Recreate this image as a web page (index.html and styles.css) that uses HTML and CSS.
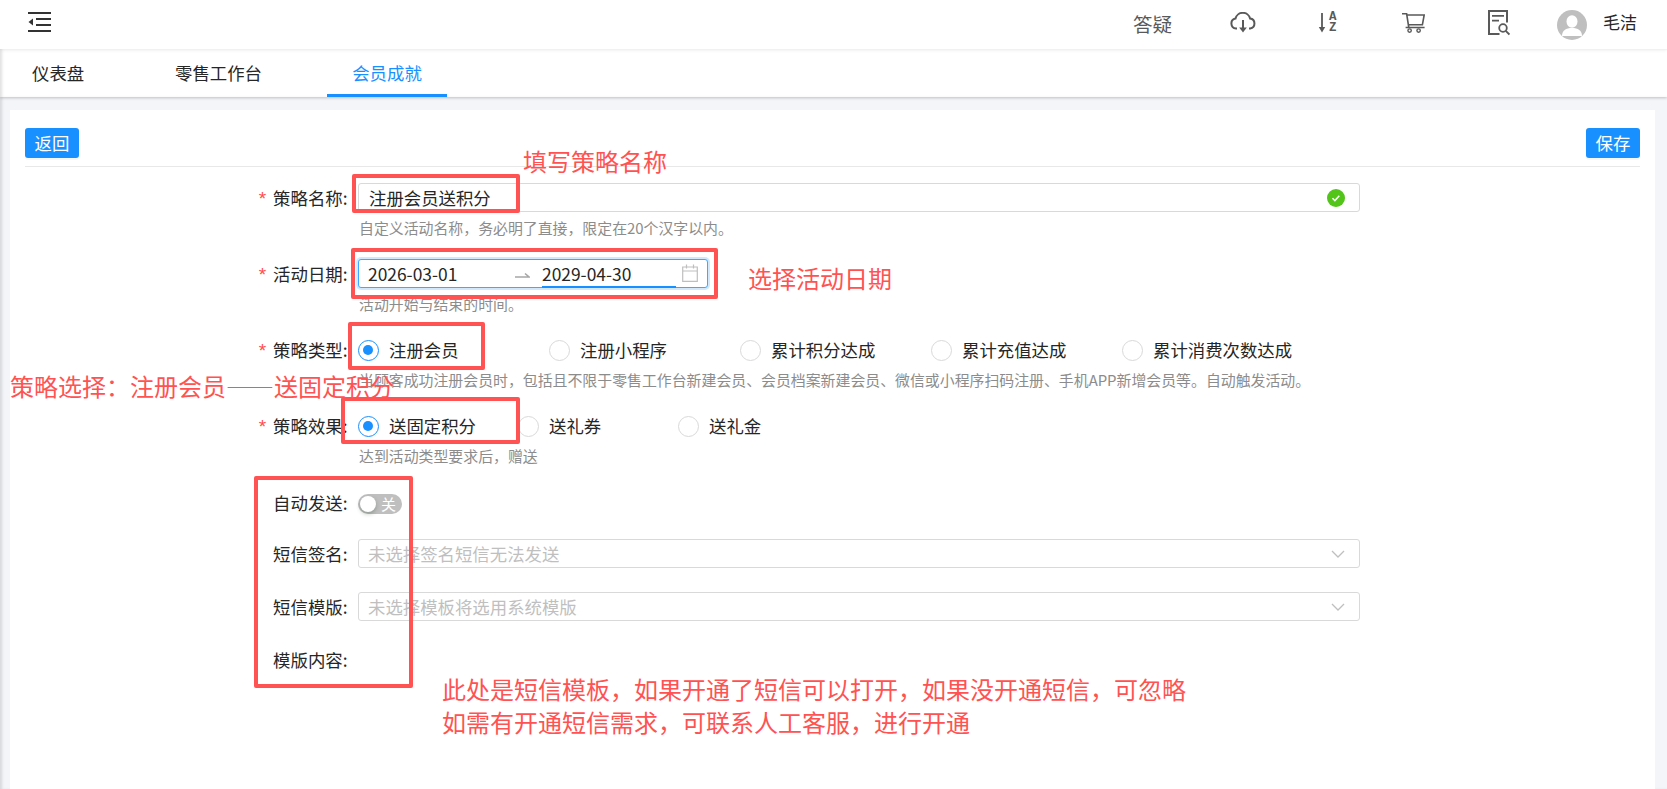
FILE: index.html
```html
<!DOCTYPE html>
<html lang="zh-CN">
<head>
<meta charset="utf-8">
<title>会员成就</title>
<link rel="stylesheet" href="styles.css">
</head>
<body>
<div class="page">
  <header class="topbar">
    <svg class="menu-icon" viewBox="0 0 23 20" width="23" height="20"><path d="M0 1h23M8 7h15M8 13h15M0 19h23" stroke="#333" stroke-width="1.8" fill="none"/><path d="M5 6.5v7L0.5 10z" fill="#333"/></svg>
    <div class="top-actions">
      <span class="qa">答疑</span>
      <svg class="ic ic-cloud" viewBox="0 0 26 22" width="26" height="22"><path d="M7 16.5H6a5 5 0 0 1-.5-9.9 7.5 7.5 0 0 1 14.6 0 5 5 0 0 1 .1 9.9H19" fill="none" stroke="#595959" stroke-width="2"/><path d="M13 8v11" stroke="#595959" stroke-width="2"/><path d="M9.2 15.5h7.6L13 20.5z" fill="#595959"/></svg>
      <span class="ic-sort">
        <svg viewBox="0 0 8 22" width="8" height="22"><path d="M4 1v17" stroke="#595959" stroke-width="1.8"/><path d="M.8 15h6.4L4 20.5z" fill="#595959"/></svg>
        <span class="az"><span>A</span><span>Z</span></span>
      </span>
      <svg class="ic ic-cart" viewBox="0 0 23 20" width="23" height="20"><path d="M0 .6h4.6L6.8 14.5M4.8 2h17.4l-1.8 9.7H6.4M3.6 14.5h19" fill="none" stroke="#595959" stroke-width="1.6"/><circle cx="7.6" cy="17.6" r="1.7" fill="none" stroke="#595959" stroke-width="1.4"/><circle cx="16.6" cy="17.6" r="1.7" fill="none" stroke="#595959" stroke-width="1.4"/></svg>
      <svg class="ic ic-report" viewBox="0 0 22 26" width="22" height="26"><path d="M11.5 24H1V1h18v11.5" fill="none" stroke="#595959" stroke-width="2"/><path d="M4 5.8h12M4 10.7h7" stroke="#595959" stroke-width="1.8"/><circle cx="15" cy="18" r="3.8" fill="none" stroke="#595959" stroke-width="1.8"/><path d="M17.8 20.8l3.6 3.7" stroke="#595959" stroke-width="1.8"/></svg>
      <svg class="avatar" viewBox="0 0 30 30" width="30" height="30"><clipPath id="av"><circle cx="15" cy="15" r="15"/></clipPath><g clip-path="url(#av)"><rect width="30" height="30" fill="#bfbfbf"/><ellipse cx="15" cy="11.5" rx="5.5" ry="6.2" fill="#fff"/><path d="M5 26c0-5.5 4-8 10-8s10 2.5 10 8z" fill="#fff"/></g></svg>
      <span class="user">毛洁</span>
    </div>
  </header>

  <nav class="tabs">
    <a class="tab tab-a">仪表盘</a>
    <a class="tab tab-b">零售工作台</a>
    <a class="tab tab-c active">会员成就</a>
  </nav>

  <main class="content">
    <section class="card">
      <div class="toolbar">
        <button class="btn">返回</button>
        <button class="btn">保存</button>
      </div>

      <form class="form">
        <div class="row">
          <label class="label req">策略名称:</label>
          <div class="field">
            <div class="input">注册会员送积分
              <svg class="ok" viewBox="0 0 18 18" width="18" height="18"><circle cx="9" cy="9" r="9" fill="#52c41a"/><path d="M5.5 9.2l2.4 2.4 4.4-4.8" fill="none" stroke="#fff" stroke-width="1.5"/></svg>
            </div>
            <p class="desc">自定义活动名称，务必明了直接，限定在20个汉字以内。</p>
          </div>
        </div>

        <div class="row">
          <label class="label req">活动日期:</label>
          <div class="field">
            <div class="range">
              <span class="date date-from">2026-03-01</span>
              <svg class="arrow" viewBox="0 0 16 8" width="16" height="8"><path d="M1 6h14L11 2.5" fill="none" stroke="#a6a6a6" stroke-width="1.6"/></svg>
              <span class="date date-to">2029-04-30</span>
              <svg class="cal" viewBox="0 0 16 18" width="16" height="18"><path d="M.7 3h14.6v14.3H.7zM.7 7h14.6M4.5 .5v4M11.5 .5v4" fill="none" stroke="#bfbfbf" stroke-width="1.2"/></svg>
            </div>
            <p class="desc">活动开始与结束的时间。</p>
          </div>
        </div>

        <div class="row">
          <label class="label req">策略类型:</label>
          <div class="field">
            <div class="radios radios-wide">
              <span class="radio on">注册会员</span>
              <span class="radio">注册小程序</span>
              <span class="radio">累计积分达成</span>
              <span class="radio">累计充值达成</span>
              <span class="radio">累计消费次数达成</span>
            </div>
            <p class="desc">当顾客成功注册会员时，包括且不限于零售工作台新建会员、会员档案新建会员、微信或小程序扫码注册、手机APP新增会员等。自动触发活动。</p>
          </div>
        </div>

        <div class="row">
          <label class="label req">策略效果:</label>
          <div class="field">
            <div class="radios radios-narrow">
              <span class="radio on">送固定积分</span>
              <span class="radio">送礼券</span>
              <span class="radio">送礼金</span>
            </div>
            <p class="desc">达到活动类型要求后，赠送</p>
          </div>
        </div>

        <div class="plain">
          <div class="row row-switch">
            <label class="label">自动发送:</label>
            <div class="field"><span class="switch"><i class="knob"></i>关</span></div>
          </div>
          <div class="row">
            <label class="label">短信签名:</label>
            <div class="field"><div class="select">未选择签名短信无法发送<svg class="chev" viewBox="0 0 14 8" width="14" height="8"><path d="M1 1l6 6 6-6" fill="none" stroke="#bfbfbf" stroke-width="1.3"/></svg></div></div>
          </div>
          <div class="row">
            <label class="label">短信模版:</label>
            <div class="field"><div class="select">未选择模板将选用系统模版<svg class="chev" viewBox="0 0 14 8" width="14" height="8"><path d="M1 1l6 6 6-6" fill="none" stroke="#bfbfbf" stroke-width="1.3"/></svg></div></div>
          </div>
          <div class="row">
            <label class="label">模版内容:</label>
            <div class="field"></div>
          </div>
        </div>
      </form>
    </section>
  </main>

  <div class="mark mark-name"></div>
  <div class="mark mark-date"></div>
  <div class="mark mark-type"></div>
  <div class="mark mark-effect"></div>
  <div class="mark mark-sms"></div>
  <div class="note note-name">填写策略名称</div>
  <div class="note note-date">选择活动日期</div>
  <div class="note note-type">策略选择：注册会员——送固定积分</div>
  <div class="note note-sms">此处是短信模板，如果开通了短信可以打开，如果没开通短信，可忽略<br>如需有开通短信需求，可联系人工客服，进行开通</div>
</div>
</body>
</html>
```

FILE: styles.css
```css
* { box-sizing: border-box; }
html, body { margin: 0; height: 100%; }
body {
  font-family: "Noto Sans CJK SC", "Noto Sans", sans-serif;
  font-size: 17.4px;
  color: #262626;
  background: #f3f5f9;
  overflow: hidden;
}
.page { position: relative; width: 1667px; height: 789px; display: flex; flex-direction: column; }

.topbar {
  height: 49px;
  background: #fff;
  display: flex;
  align-items: center;
  padding-left: 28px;
  box-shadow: 0 1px 4px rgba(0, 21, 41, .08);
  position: relative;
  z-index: 2;
}
.menu-icon { margin-top: -5px; }
.top-actions { margin-left: auto; display: flex; align-items: center; height: 49px; }
.qa { font-size: 19.6px; color: #595959; width: 40px; margin-right: 57px; white-space: nowrap; line-height: 47px; height: 49px; }
.ic { flex: none; }
.ic-cloud { margin-right: 62px; margin-top: -3px; }
.ic-sort { display: flex; align-items: center; width: 20px; margin-right: 64px; margin-top: -3px; }
.az { display: flex; flex-direction: column; margin-left: 3px; font-family: "Liberation Mono", monospace; font-size: 12.5px; font-weight: 700; line-height: 11px; color: #595959; }
.ic-cart { margin-right: 63px; margin-top: -3px; }
.ic-report { margin-right: 47px; margin-top: -4px; }
.avatar { margin-top: 1px; }
.user { margin-left: 16px; width: 64px; font-size: 17px; color: #262626; margin-top: -6px; }

.tabs {
  height: 48px;
  background: #fff;
  display: flex;
  box-shadow: 0 1px 3px rgba(0, 0, 0, .2), inset 3px 0 3px -1px rgba(0, 0, 0, .12);
  position: relative;
  z-index: 1;
}
.tab { display: block; height: 48px; line-height: 48px; color: #262626; }
.tab-a { width: 175px; padding-left: 32px; }
.tab-b { width: 152px; }
.tab-c { width: 120px; color: #1890ff; border-bottom: 3px solid #1890ff; text-align: center; }

.content { flex: 1; padding: 13px 12px 0 10px; min-height: 0; box-shadow: inset 3px 0 3px -1px rgba(0, 0, 0, .12); }
.card { height: 100%; background: #fff; padding: 18px 15px 0; }

.toolbar { display: flex; justify-content: space-between; align-items: flex-start; height: 39px; border-bottom: 1px solid #e8e8e8; }
.btn {
  width: 54px; height: 30px; padding: 0; border: 0; border-radius: 3px;
  background: #1890ff; color: #fff; font: inherit; line-height: 30px;
  box-shadow: 0 2px 0 rgba(0, 0, 0, .03);
}

.form { padding-top: 16px; display: flex; flex-direction: column; gap: 18px; }
.row { display: grid; grid-template-columns: 333px 1002px; align-items: start; }
.label { display: block; height: 29px; line-height: 29px; text-align: right; padding-right: 10.5px; color: #262626; white-space: nowrap; }
.req::before { content: "*"; color: #ff4d4f; font-family: "Liberation Mono", monospace; font-size: 19px; margin-right: 5px; }
.field { min-width: 0; }
.desc { margin: 4px 0 0; padding-left: 1px; height: 25px; line-height: 24px; font-size: 14.9px; color: #8c8c8c; white-space: nowrap; }

.input, .select {
  position: relative; height: 29px; line-height: 27px; padding-left: 10px;
  border: 1px solid #d9d9d9; border-radius: 3px; background: #fff;
}
.select { color: #bfbfbf; padding-left: 9px; }
.ok { position: absolute; right: 14px; top: 5px; }
.chev { position: absolute; right: 14px; top: 10px; }

.range {
  width: 350px; height: 29px; border: 1px solid #40a9ff; border-radius: 3px;
  box-shadow: 0 0 0 2px rgba(24, 144, 255, .2);
  display: flex; align-items: center; padding-left: 9px; background: #fff;
}
.date { line-height: 27px; height: 27px; white-space: nowrap; }
.date-from { width: 146px; }
.arrow { flex: none; margin-top: 2px; }
.date-to { width: 134px; margin-left: 12px; border-bottom: 2px solid #1890ff; height: 28px; margin-top: 1px; }
.cal { margin-left: 6px; flex: none; margin-top: -1px; }

.radios { display: flex; height: 29px; align-items: center; }
.radio { position: relative; display: block; padding-left: 31px; line-height: 29px; white-space: nowrap; flex: none; }
.radio::before {
  content: ""; position: absolute; left: 0; top: 5px; width: 19px; height: 19px;
  border: 1px solid #d9d9d9; border-radius: 50%; background: #fff;
}
.radio.on::before { border-color: #1890ff; }
.radio.on::after {
  content: ""; position: absolute; left: 4.5px; top: 9.5px; width: 10px; height: 10px;
  border-radius: 50%; background: #1890ff;
}
.radios-wide .radio { width: 191px; }
.radios-narrow .radio { width: 160px; }

.plain { display: flex; flex-direction: column; gap: 24px; margin-top: 4px; }
.row-switch .label { height: 24px; line-height: 24px; }
.switch {
  display: block; position: relative; width: 44px; height: 20px; margin-top: 3px;
  border-radius: 10px; background: #bfbfbf; color: #fff; font-size: 15px; line-height: 20px;
  padding-left: 23px;
}
.knob { position: absolute; left: 2px; top: 2px; width: 16px; height: 16px; border-radius: 50%; background: #fff; box-shadow: 0 2px 4px rgba(0, 35, 11, .25); }

.mark { position: absolute; border: 4px solid #ff5252; border-radius: 2px; z-index: 5; }
.mark-name { left: 352px; top: 174px; width: 168px; height: 39px; }
.mark-date { left: 351px; top: 248px; width: 367px; height: 51px; }
.mark-type { left: 348px; top: 322px; width: 137px; height: 48px; }
.mark-effect { left: 341px; top: 397px; width: 179px; height: 47px; }
.mark-sms { left: 254px; top: 476px; width: 159px; height: 212px; }

.note { position: absolute; z-index: 6; font-size: 24px; line-height: 33px; color: #ff5252; white-space: nowrap; }
.note-name { left: 523px; top: 144px; }
.note-date { left: 748px; top: 261px; }
.note-type { left: 10px; top: 369px; }
.note-sms { left: 442px; top: 672px; }
```
